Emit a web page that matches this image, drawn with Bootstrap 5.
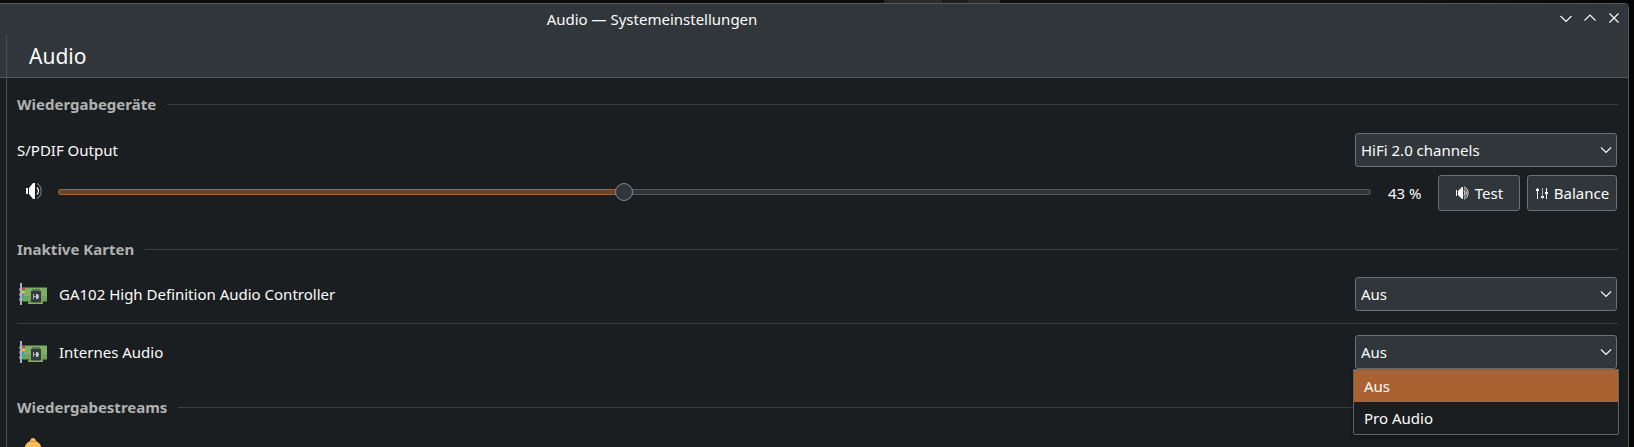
<!DOCTYPE html>
<html lang="de">
<head>
<meta charset="utf-8">
<meta name="viewport" content="width=device-width, initial-scale=1">
<title>Audio — Systemeinstellungen</title>
<link href="https://cdn.jsdelivr.net/npm/bootstrap@5.3.0/dist/css/bootstrap.min.css" rel="stylesheet">
<style>
:root { --bg:#1b1e20; --bar:#31363a; --line:#4b4f52; --rule:#3c4042; --edge:#6c7073; --accent:#aa6232; --fg:#fcfcfc; }
body { font-family:"Noto Sans",sans-serif; font-size:15px; line-height:22px; color:var(--fg);
  background:linear-gradient(90deg,#0c0c0c 884px,#2b2b2b 884px 942px,#1e1e1e 942px 968px,#2b2b2b 968px 1000px,#101010 1000px 1400px,#050505); }
.desktop { padding:3px 5px 0 0; }
.app-window { background:var(--bg); border:1px solid #54595c; border-width:1px 1px 0 0; border-top-right-radius:5px; }
.titlebar { height:30px; background:var(--bar); border-top-right-radius:4px; padding-right:2px; }
/* the window continues past the left edge of the screen */
.title-text { margin:0 -74px 0 -324px; font-size:15px; line-height:22px; }
.win-btn { width:24px; height:24px; padding:0; border:0; background:none; color:var(--fg); display:grid; place-items:center; position:relative; }
.side-edge { width:6px; }
.head-strip { height:44px; background:var(--bar); border-bottom:1px solid #54595c; }
.pane { border-left:1px solid var(--line); min-width:0; }
.pane-title { font-size:21px; line-height:28px; font-weight:400; padding-left:22px; }
.pane-body { padding:15px 10px 0 10px; }
.section-title { font-size:15px; line-height:22px; font-weight:700; color:#b0b2b2; gap:11px; margin:0 0 17px; }
.section-title::after { content:""; flex:1; height:1px; background:var(--rule); }
.section-block { margin-bottom:27px; }
.section-block:first-child .section-title { margin-bottom:18px; }
.device-row { padding-right:1px; }
.form-select.combo { width:262px; height:34px; padding:0 30px 0 5px; font-size:15px; line-height:22px; color:var(--fg); border:1px solid var(--edge); border-radius:3px;
  background-color:var(--bar); background-size:12px 8px; background-position:right 4px center;
  background-image:url("data:image/svg+xml,%3Csvg xmlns='http://www.w3.org/2000/svg' viewBox='0 0 12 8'%3E%3Cpath d='M1 1.5l5 5 5-5' fill='none' stroke='%23fcfcfc' stroke-width='1.1'/%3E%3C/svg%3E"); }
.tool-btn { height:36px; padding:0; font-size:15px; line-height:22px; color:var(--fg); background:var(--bar); border:1px solid var(--edge); border-radius:3px; gap:6px; }
.btn-test { width:82px; }
.btn-balance { width:90px; margin-left:7px; }
.mute-btn { width:32px; height:32px; padding:0; border:0; background:none; display:grid; place-items:center; color:var(--fg); }
.volume { appearance:none; -webkit-appearance:none; flex:1; min-width:0; height:18px; margin:0 17px 2px 9px; background:none; }
.volume::-webkit-slider-runnable-track { height:6px; border:1px solid transparent; border-radius:3px;
  background:linear-gradient(90deg,#69442c var(--level),#303437 var(--level)) padding-box,linear-gradient(90deg,var(--accent) var(--level),#55595b var(--level)) border-box; }
.volume::-webkit-slider-thumb { -webkit-appearance:none; width:18px; height:18px; margin-top:-7px; border-radius:50%; background:#31363a; border:1px solid #85898b; }
.percent { width:50px; }
.card-icon { width:28px; height:24px; flex:none; margin:0 12px 0 2px; }
.row-rule { height:1px; margin:12px 0 11px; background:var(--rule); }
.dropdown-menu.combo-list { top:100%; left:-2px; right:-2px; min-width:0; padding:0; margin:0; font-size:15px; background:var(--bg); border:1px solid #606466; border-radius:0 0 2px 2px; box-shadow:0 2px 4px #0006; }
.combo-list .dropdown-item { height:32px; padding:5px 10px; line-height:22px; color:var(--fg); }
.combo-list .dropdown-item.active { background:var(--accent); }
.stream-title { margin-bottom:20px; }
.stream-icon { margin-left:8px; }
</style>
</head>
<body>
<svg class="d-none" aria-hidden="true">
  <symbol id="card-art" viewBox="0 0 28 24">
    <path fill="#7fae67" d="M2 6h26v8H2z"/><path fill="#71a35b" d="M2 14h26v5H2z"/><path fill="#6b9a56" d="M9 19h15v2H9z"/>
    <path fill="#436b37" d="M2 5h26v1H2zM24 19h4v1h-4zM4 19h4v1H4z"/><path fill="#9aa84d" d="M9 21h15v1H9z"/>
    <path fill="#587d4a" d="M13 7h8v2h-8zM13 20h8v1h-8z"/>
    <path fill="#343a3e" d="M12 9h10v11H12z"/>
    <path fill="#a9b0b4" d="M14 12h1v5h-1zM15 14h2v1h-2zM19 13h1v3h-1z"/><path fill="#c3c8cc" d="M17 12h2v5h-2z"/>
    <path fill="#da3559" d="M3 6h3v2H3z"/><path fill="#f3b23b" d="M3 9h3v2H3z"/><path fill="#329fc2" d="M3 12h2v3H3z"/><path fill="#27b987" d="M3 16h3v2H3z"/>
    <path fill="#69777c" d="M0 6h1v3H0zM0 11h1v3H0zM0 16h1v3H0z"/><path fill="#a7b3ba" d="M1 1h2v22H1z"/>
  </symbol>
</svg>
<div class="desktop vh-100 overflow-hidden">
  <div class="app-window h-100 d-flex flex-column overflow-hidden">
    <header class="titlebar d-flex align-items-center flex-shrink-0">
      <div class="title-text flex-grow-1 text-center">Audio — Systemeinstellungen</div>
      <button class="win-btn" type="button" aria-label="Minimieren"><svg width="12" height="12" fill="none" stroke="currentColor" stroke-width="1.1"><path d="M.5 3l5.500 5.500L11.500 3"/></svg></button>
      <button class="win-btn" type="button" aria-label="Maximieren"><svg width="12" height="12" fill="none" stroke="currentColor" stroke-width="1.1"><path d="M.5 7.500L6 2l5.500 5.500"/></svg></button>
      <button class="win-btn" type="button" aria-label="Schließen"><svg width="12" height="12" fill="none" stroke="currentColor" stroke-width="1.1"><path d="M1.500 .5l9 9m0-9l-9 9"/></svg></button>
    </header>
    <div class="d-flex flex-grow-1">
      <div class="side-edge"><div class="head-strip"></div></div>
      <main class="pane flex-grow-1">
        <div class="head-strip d-flex align-items-center"><h1 class="pane-title m-0">Audio</h1></div>
        <div class="pane-body">
          <section class="section-block">
            <h2 class="section-title d-flex align-items-center">Wiedergabegeräte</h2>
            <div class="device-row d-flex align-items-center justify-content-between mb-2">
              <label for="profile-out">S/PDIF Output</label>
              <select id="profile-out" class="form-select combo"><option>HiFi 2.0 channels</option></select>
            </div>
            <div class="device-row d-flex align-items-center">
              <button class="mute-btn" type="button" aria-label="Stummschalten">
                <svg width="18" height="20" viewBox="-1 0 18 20" fill="none"><path fill="#fcfcfc" d="M1 5h2v6H1zM4 5l4-5h2v16H8l-4-5z"/><path stroke="#fcfcfc" stroke-width="1.200" d="M12 4.500q3 3.500 0 7"/><path stroke="#727678" stroke-width="1.200" d="M12 .5c5.500 3 5.500 12 0 15"/></svg>
              </button>
              <input class="volume" type="range" min="0" max="100" value="43" aria-label="Lautstärke" style="--level:43%">
              <output class="percent">43 %</output>
              <button class="btn tool-btn btn-test d-flex align-items-center justify-content-center" type="button">
                <svg width="14" height="16" viewBox="-1 -1 14 16" fill="none"><path fill="#fcfcfc" d="M0 4h1v6H0zM2 5l4-4h1v12H6L2 9z"/><path stroke="#fcfcfc" stroke-width="1" d="M8 4.500q2 2.500 0 5"/><path stroke="#d5d7d8" stroke-width="1" d="M8 2.500c3.300 1.500 3.300 7.500 0 9M8 .8c5.500 2 5.500 10.400 0 12.400"/></svg>Test
              </button>
              <button class="btn tool-btn btn-balance d-flex align-items-center justify-content-center" type="button">
                <svg width="13" height="14" viewBox="-1 -1 13 14"><path fill="#fcfcfc" d="M1 1h1v11H1zM0 2h3v2H0zM10 1h1v11h-1zM9 5h3v2H9zM5 9h3v2H5z"/><path fill="#aeb1b3" d="M6 1h1v11H6z"/></svg>Balance
              </button>
            </div>
          </section>
          <section class="section-block">
            <h2 class="section-title d-flex align-items-center">Inaktive Karten</h2>
            <div class="device-row d-flex align-items-center">
              <svg class="card-icon" aria-hidden="true"><use href="#card-art"/></svg>
              <label class="flex-grow-1" for="card-a">GA102 High Definition Audio Controller</label>
              <select id="card-a" class="form-select combo"><option>Aus</option><option>Pro Audio</option></select>
            </div>
            <div class="row-rule"></div>
            <div class="device-row d-flex align-items-center">
              <svg class="card-icon" aria-hidden="true"><use href="#card-art"/></svg>
              <label class="flex-grow-1" for="card-b">Internes Audio</label>
              <div class="dropdown">
                <select id="card-b" class="form-select combo"><option>Aus</option><option>Pro Audio</option></select>
                <div class="dropdown-menu combo-list show">
                  <button class="dropdown-item active" type="button">Aus</button>
                  <button class="dropdown-item" type="button">Pro Audio</button>
                </div>
              </div>
            </div>
          </section>
          <section>
            <h2 class="section-title stream-title d-flex align-items-center">Wiedergabestreams</h2>
            <svg class="stream-icon d-block" width="16" height="20" viewBox="0 0 16 20"><path fill="#fabc58" d="M8 0C6.500 0 5.500 1 5 3 2 4.500 0 6.500 0 9v9h16V9c0-2.500-2-4.500-5-6-.5-2-1.500-3-3-3z"/><path fill="#c99045" d="M5 3h6v1H5z"/></svg>
          </section>
        </div>
      </main>
    </div>
  </div>
</div>
<script src="https://cdn.jsdelivr.net/npm/bootstrap@5.3.0/dist/js/bootstrap.bundle.min.js"></script>
</body>
</html>
